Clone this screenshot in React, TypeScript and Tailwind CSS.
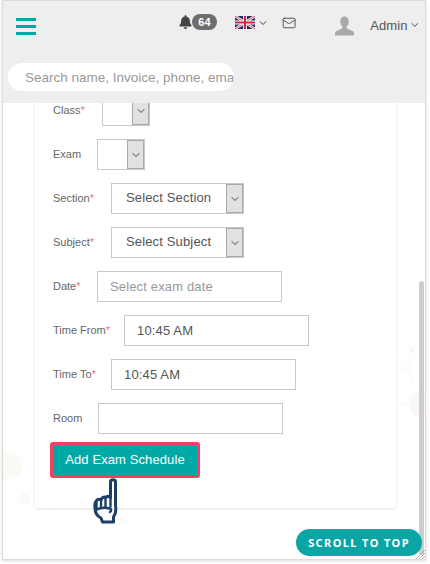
import { ChevronDown, Mail } from 'lucide-react';
import { FaBell } from 'react-icons/fa';

const boxClass = 'h-[31px] border border-[#c8c8c8] bg-white text-[13px] tracking-[0.15px] text-[#555] px-3 outline-none';

function FormLabel({ text, required, width }: { text: string; required?: boolean; width: string }) {
  return (
    <label className={`text-[11px] text-[#666] whitespace-nowrap ${width}`}>
      {text}
      {required && <span className="text-[#f0708a]">*</span>}
    </label>
  );
}

function SelectBox({ text, width }: { text?: string; width: string }) {
  return (
    <div className={`flex h-[31px] border border-[#c8c8c8] bg-white ${width}`}>
      <div className="flex-1 pl-[14px] text-[13px] leading-[27px] tracking-[0.15px] text-[#555] whitespace-nowrap overflow-hidden">{text}</div>
      <div className="flex w-[17px] items-center justify-center border border-[#aaa] bg-[#e1e1e1]">
        <ChevronDown className="h-3 w-3 text-[#333]" strokeWidth={1.8} />
      </div>
    </div>
  );
}

function UkFlag() {
  return (
    <svg viewBox="0 0 60 36" className="h-[13px] w-5" preserveAspectRatio="none">
      <rect width="60" height="36" fill="#1f2f66" />
      <path d="M0 0L60 36M60 0L0 36" stroke="#fff" strokeWidth="7" />
      <path d="M0 0L60 36M60 0L0 36" stroke="#c8283f" strokeWidth="2.5" />
      <path d="M30 0V36M0 18H60" stroke="#fff" strokeWidth="11" />
      <path d="M30 0V36M0 18H60" stroke="#c8283f" strokeWidth="6" />
    </svg>
  );
}

function PointingHand() {
  return (
    <svg viewBox="0 0 27 47" className="h-[47px] w-[27px]" fill="none" stroke="#1b3f66" strokeWidth="3" strokeLinecap="round" strokeLinejoin="round">
      <path d="M17.5 19V4C17.5 1 22.5 1 22.5 4V28C23.5 33 22.5 36 20.5 39V44H9.5L8 40C4 38 2 34 2 30C1.5 27 2 24 3.5 22.5C5 20.5 7 21 8 22C9 19.5 11 18.5 12.5 19.5C14 18 16 18 17.5 19.5" />
      <path d="M3.5 23V30M8 22V29.5M12.5 20V29M17.5 19V28.5" strokeWidth="2.4" />
      <path d="M3 32C7 29.5 13 29.5 17 30.5C18.5 31 18.5 33 17 34" strokeWidth="2.4" />
    </svg>
  );
}

function Backdrop() {
  return (
    <svg className="absolute inset-0 h-full w-full" viewBox="0 0 424 560" fill="none">
      <g opacity="0.35">
        <circle cx="5" cy="466" r="14" fill="#f0f6e4" />
        <circle cx="22" cy="500" r="6" fill="#f1f4ee" />
        <path d="M5 466L22 500L52 512M15 440L40 425" stroke="#f1f3f1" />
        <circle cx="421" cy="405" r="13" fill="#f9e6ec" />
        <circle cx="411" cy="350" r="3" fill="#fbe6ec" />
        <circle cx="405" cy="367" r="4" stroke="#eeeeee" />
        <path d="M396 355L405 367L421 405M396 405H421M411 350L405 367" stroke="#f5eef0" />
        <circle cx="120" cy="521" r="2.5" fill="#e6f2f8" />
      </g>
    </svg>
  );
}

export default function App() {
  return (
    <div className="h-[564px] w-[430px] bg-white pl-[2px]" style={{ fontFamily: '"Liberation Sans", Arial, sans-serif' }}>
      <div className="relative flex h-[560px] w-[424px] flex-col overflow-hidden border border-[#dcdcdc] shadow-[0_1px_3px_rgba(0,0,0,0.15)]">
        <Backdrop />

        <header className="relative z-10 h-[102px] shrink-0 bg-[#eeeeee] px-[5px]">
          <div className="flex h-[62px] items-start">
            <div className="mt-[17px] ml-[8px] flex w-[21px] flex-col gap-[4px]">
              <span className="h-[3px] bg-[#00a9a5]" />
              <span className="h-[3px] bg-[#00a9a5]" />
              <span className="h-[3px] bg-[#00a9a5]" />
            </div>
            <div className="mt-[13px] ml-[143px] flex items-center">
              <FaBell className="h-[14px] w-[13px] text-[#444]" />
              <span className="h-4 w-[25px] rounded-full bg-[#6d6d6d] text-center text-[11px] font-bold leading-4 text-white">64</span>
            </div>
            <div className="mt-[15px] ml-[18px] flex items-center gap-[2px]">
              <UkFlag />
              <ChevronDown className="h-3 w-3 text-[#333]" strokeWidth={1.8} />
            </div>
            <Mail className="mt-[14px] ml-[13px] h-4 w-[15px] text-[#444]" strokeWidth={1.5} />
            <svg viewBox="0 0 20 20" className="mt-[15px] ml-[39px] h-5 w-5" fill="#a9a9a9">
              <path d="M10 0C7 0 5.6 2.2 5.6 5C5.6 7.6 6.6 9.5 7.8 10.6V12.4L1.5 15.2C0.5 15.7 0 16.6 0 17.6V20H20V17.6C20 16.6 19.5 15.7 18.5 15.2L12.2 12.4V10.6C13.4 9.5 14.4 7.6 14.4 5C14.4 2.2 13 0 10 0Z" />
            </svg>
            <span className="mt-[15px] ml-[16px] text-[13px] tracking-[0.1px] text-[#555]">Admin</span>
            <ChevronDown className="mt-[18px] ml-[1px] h-3 w-3 text-[#333]" strokeWidth={1.8} />
          </div>
          <input
            className="h-7 w-[226px] rounded-full bg-white pl-[17px] text-[13.5px] text-[#555] outline-none placeholder:text-[#999]"
            placeholder="Search name, Invoice, phone, email"
          />
        </header>

        <main className="relative flex-1 overflow-hidden">
          <div className="mx-[32px] -mt-[8px] h-[413px] w-[361px] rounded-b-[3px] bg-white/70 pl-[18px] shadow-[0_1px_3px_rgba(0,0,0,0.1),0_0_2px_rgba(0,0,0,0.05)]">
            <div className="flex flex-col gap-[13px]">
              <div className="flex items-center">
                <FormLabel text="Class" required width="w-[49px]" />
                <SelectBox width="w-[48px]" />
              </div>
              <div className="flex items-center">
                <FormLabel text="Exam" width="w-[44px]" />
                <SelectBox width="w-[48px]" />
              </div>
              <div className="flex items-center">
                <FormLabel text="Section" required width="w-[58px]" />
                <SelectBox text="Select Section" width="w-[133px]" />
              </div>
              <div className="flex items-center">
                <FormLabel text="Subject" required width="w-[58px]" />
                <SelectBox text="Select Subject" width="w-[133px]" />
              </div>
              <div className="flex items-center">
                <FormLabel text="Date" required width="w-[44px]" />
                <input className={`${boxClass} w-[185px] placeholder:text-[#999]`} placeholder="Select exam date" />
              </div>
              <div className="flex items-center">
                <FormLabel text="Time From" required width="w-[71px]" />
                <input className={`${boxClass} w-[185px]`} defaultValue="10:45 AM" />
              </div>
              <div className="flex items-center">
                <FormLabel text="Time To" required width="w-[58px]" />
                <input className={`${boxClass} w-[185px]`} defaultValue="10:45 AM" />
              </div>
              <div className="flex items-center">
                <FormLabel text="Room" width="w-[45px]" />
                <input className={`${boxClass} w-[185px]`} />
              </div>
            </div>
            <button className="mt-[8px] -ml-[3px] h-9 w-[150px] rounded-[3px] border-[3px] border-[#f5405f] bg-[#00a9a5] text-[13px] tracking-[0.1px] text-white">
              Add Exam Schedule
            </button>
          </div>

          <div className="absolute left-[90px] top-[375px]">
            <PointingHand />
          </div>
          <div className="absolute right-[1px] top-[178px] h-[274px] w-[5px] rounded-full bg-[#cccccc]" />
          <button className="absolute left-[293px] top-[426px] h-[27px] w-[126px] rounded-full bg-[#0aa5a5] pt-[1px] text-[11px] font-bold tracking-[1.4px] text-white" style={{ fontFamily: '"Noto Sans", sans-serif' }}>
            SCROLL TO TOP
          </button>
          <svg viewBox="0 0 10 10" className="absolute right-0 bottom-0 h-[10px] w-[10px]" stroke="#999" strokeWidth="0.8">
            <path d="M1 10L10 1M4 10L10 4M7 10L10 7" />
          </svg>
        </main>
      </div>
    </div>
  );
}
